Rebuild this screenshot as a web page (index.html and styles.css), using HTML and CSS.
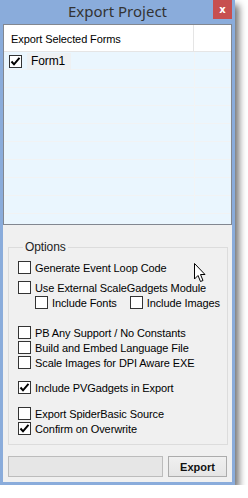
FILE: index.html
```html
<!DOCTYPE html>
<html lang="en">
<head>
  <meta charset="UTF-8" />
  <title>Export Project</title>
  <link rel="stylesheet" href="styles.css">
</head>
<body>
  <div class="window">
    <div class="titlebar">
      <span class="title">Export Project</span>
      <button class="close">x</button>
    </div>

    <div class="client">
      <div class="list">
        <div class="list-head">
          <div class="col-main">Export Selected Forms</div>
          <div class="col-rest"></div>
        </div>
        <div class="list-body">
          <div class="list-row">
            <span class="check on"><svg viewBox="0 0 11 11"><path d="M1.5 5.5 L4 8.3 L9.5 1.8" /></svg></span>
            <span class="row-text">Form1</span>
          </div>
        </div>
      </div>

      <fieldset class="options">
        <legend>Options</legend>
        <label class="opt"><span class="check"></span>Generate Event Loop Code</label>
        <label class="opt gap5"><span class="check"></span>Use External ScaleGadgets Module</label>
        <div class="opt sub">
          <label class="sub-item"><span class="check"></span>Include Fonts</label>
          <label class="sub-item"><span class="check"></span>Include Images</label>
        </div>
        <label class="opt gap15"><span class="check"></span>PB Any Support / No Constants</label>
        <label class="opt"><span class="check"></span>Build and Embed Language File</label>
        <label class="opt"><span class="check"></span>Scale Images for DPI Aware EXE</label>
        <label class="opt gap10"><span class="check on"><svg viewBox="0 0 11 11"><path d="M1.5 5.5 L4 8.3 L9.5 1.8" /></svg></span>Include PVGadgets in Export</label>
        <label class="opt gap11"><span class="check"></span>Export SpiderBasic Source</label>
        <label class="opt"><span class="check on"><svg viewBox="0 0 11 11"><path d="M1.5 5.5 L4 8.3 L9.5 1.8" /></svg></span>Confirm on Overwrite</label>
      </fieldset>

      <div class="bottom">
        <div class="progress"></div>
        <button class="export">Export</button>
      </div>
    </div>

    <svg class="cursor" viewBox="0 0 12 20" width="12" height="20">
      <path d="M0.5 0.5 L0.5 16 L4 12.5 L6.5 18.5 L9 17.5 L6.5 11.5 L11 11.5 Z" />
    </svg>
  </div>
</body>
</html>
```

FILE: styles.css
```css
body {
  margin: 0;
  background: #fff;
  font-family: 'Liberation Sans', Arial, sans-serif;
  font-size: 11px;
  letter-spacing: -0.1px;
  color: #000;
}
.window {
  position: relative;
  width: 235px;
  height: 485px;
  background: #8aacdb;
  box-shadow: 4px 5px 7px rgba(0, 0, 0, 0.55);
  display: flex;
  flex-direction: column;
}
.titlebar {
  height: 24px;
  display: flex;
  align-items: center;
  justify-content: center;
  position: relative;
}
.title {
  font-family: 'Noto Sans', 'Liberation Sans', sans-serif;
  font-size: 15px;
  letter-spacing: 0;
  color: #333;
  margin-top: -2px;
}
.close {
  position: absolute;
  top: 0;
  right: 3px;
  width: 19px;
  height: 19px;
  padding: 0;
  border: none;
  background: #c74f4f;
  color: #fff;
  font-family: 'DejaVu Sans', sans-serif;
  font-weight: bold;
  font-size: 10px;
  line-height: 17px;
}
.client {
  margin: 0 3px 3px 3px;
  background: #f0f0f0;
  flex: 1;
  display: flex;
  flex-direction: column;
  min-width: 0;
}
.list {
  height: 201px;
  box-sizing: border-box;
  border: 1px solid #828790;
  display: flex;
  flex-direction: column;
  background: #eaf6fe;
}
.list-head {
  height: 27px;
  box-sizing: border-box;
  display: flex;
  background: #fff;
  border-bottom: 1px solid #e5e5e5;
}
.col-main {
  width: 190px;
  box-sizing: border-box;
  padding: 0 0 0 7px;
  line-height: 28px;
  border-right: 1px solid #e5e5e5;
}
.col-rest {
  flex: 1;
}
.list-body {
  flex: 1;
  background:
    linear-gradient(to right, transparent 190px, #f2f4f5 190px, #f2f4f5 191px, transparent 191px),
    repeating-linear-gradient(to bottom, transparent 0, transparent 17px, #f1f3f4 17px, #f1f3f4 18px);
}
.list-row {
  height: 18px;
  display: flex;
  align-items: center;
  padding-left: 5px;
}
.row-text {
  background: #eef1f3;
  padding: 0 6px 0 4px;
  line-height: 17px;
  margin-left: 1px;
  font-size: 12px;
}
.check {
  width: 13px;
  height: 13px;
  box-sizing: border-box;
  border: 1px solid #333;
  background: #fff;
  display: inline-block;
  flex: none;
  margin-right: 4px;
}
.check svg {
  display: block;
  width: 11px;
  height: 11px;
}
.check path {
  fill: none;
  stroke: #000;
  stroke-width: 2;
}
.options {
  min-width: 0;
  margin: 15px 4px 0 5px;
  padding: 6px 4px 8px 9px;
  border: 1px solid #dcdcdc;
  display: flex;
  flex-direction: column;
}
.options legend {
  padding: 0 2px;
  margin-left: 5px;
  line-height: 14px;
  font-size: 12px;
  color: #222;
}
.opt {
  height: 15px;
  display: flex;
  align-items: center;
  white-space: nowrap;
}
.sub {
  padding-left: 17px;
  gap: 13px;
}
.sub-item {
  display: flex;
  align-items: center;
}
.gap5 { margin-top: 5px; }
.gap10 { margin-top: 10px; }
.gap11 { margin-top: 11px; }
.gap15 { margin-top: 15px; }
.bottom {
  display: flex;
  gap: 5px;
  margin: 11px 5px 0 5px;
}
.progress {
  width: 155px;
  height: 21px;
  box-sizing: border-box;
  border: 1px solid #bcbcbc;
  background: #e6e6e6;
}
.export {
  width: 59px;
  height: 21px;
  padding: 0;
  border: 1px solid #acacac;
  background: linear-gradient(#f0f0f0, #e5e5e5);
  font-family: 'Liberation Sans', Arial, sans-serif;
  font-weight: bold;
  font-size: 11px;
  color: #111;
}
.cursor {
  position: absolute;
  left: 194px;
  top: 263px;
}
.cursor path {
  fill: #fff;
  stroke: #000;
  stroke-width: 1;
}
```
